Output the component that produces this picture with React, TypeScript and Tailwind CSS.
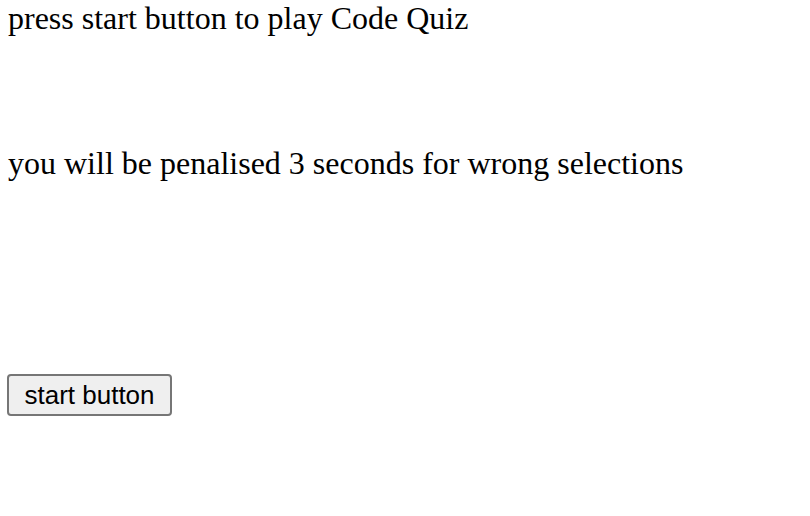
import React from "react";

export default function App() {
  return (
    <div className="min-h-[516px] w-[810px] bg-white text-black" style={{ fontFamily: '"Liberation Serif", "Times New Roman", serif' }}>
      <div className="flex flex-col items-start pl-[8px]">
        <div className="text-[32px] leading-[37px]">press start button to play Code Quiz</div>
        <div className="mt-[108px] text-[32px] leading-[37px]">you will be penalised 3 seconds for wrong selections</div>
        <button
          className="ml-[-1px] mt-[192px] h-[42px] w-[165px] rounded-[4px] border-2 border-[#767676] bg-[#efefef] text-[26px] leading-none text-black"
          style={{ fontFamily: '"Liberation Sans", Arial, sans-serif' }}
        >
          start button
        </button>
      </div>
    </div>
  );
}
